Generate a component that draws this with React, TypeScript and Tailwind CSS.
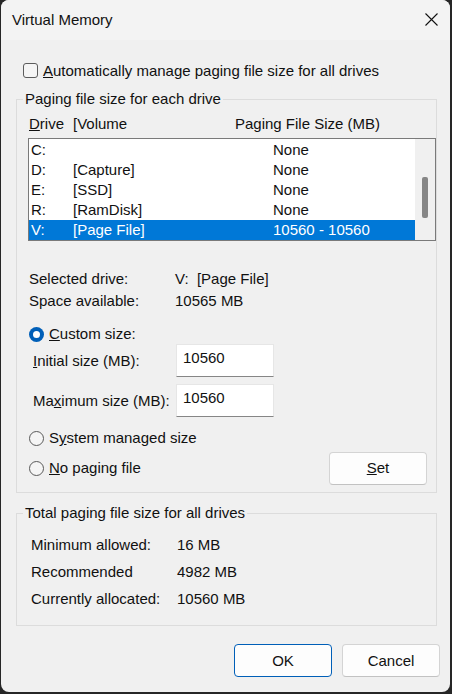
const drives = [
  { drive: "C:", volume: "", size: "None" },
  { drive: "D:", volume: "[Capture]", size: "None" },
  { drive: "E:", volume: "[SSD]", size: "None" },
  { drive: "R:", volume: "[RamDisk]", size: "None" },
  { drive: "V:", volume: "[Page File]", size: "10560 - 10560", selected: true },
]

function Radio({ checked }: { checked?: boolean }) {
  if (checked) {
    return (
      <span className="flex h-[15px] w-[15px] shrink-0 items-center justify-center rounded-full bg-[#005fb8]">
        <span className="h-[7px] w-[7px] rounded-full bg-white" />
      </span>
    )
  }
  return <span className="h-[15px] w-[15px] shrink-0 rounded-full border border-[#595959] bg-[#f5f5f5]" />
}

function SizeInput({ value }: { value: string }) {
  return (
    <div className="h-[33px] w-[98px] border border-[#e6e6e6] border-b-[#868686] bg-white pl-[6px] pt-[3px] leading-[20px]">
      {value}
    </div>
  )
}

function Button({ label, primary }: { label: React.ReactNode; primary?: boolean }) {
  return (
    <div
      className={
        primary
          ? "flex h-[33px] w-[98px] items-center justify-center rounded-[4px] border border-[#005fb8] bg-[#fdfdfd]"
          : "flex h-[33px] w-[98px] items-center justify-center rounded-[4px] border border-[#d4d4d4] border-b-[#c2c2c2] bg-[#fdfdfd]"
      }
    >
      {label}
    </div>
  )
}

export default function App() {
  return (
    <div className="h-[694px] w-[452px] bg-[#262626] pl-[1px] font-['Liberation_Sans','Noto_Sans',sans-serif] text-[15px] leading-[20px] text-[#111]">
      <div className="flex h-[692px] w-[449px] flex-col overflow-hidden rounded-[8px] bg-[#f0f0f0]">
        {/* title bar */}
        <div className="flex h-[40px] shrink-0 items-center justify-between bg-[#f3f3f3] pl-[11px] pr-[12px]">
          <span>Virtual Memory</span>
          <svg width="13" height="13" viewBox="0 0 13 13" className="mb-[2px]">
            <path d="M0.5 0.5 L12.5 12.5 M12.5 0.5 L0.5 12.5" stroke="#111" strokeWidth="1.1" fill="none" />
          </svg>
        </div>

        <div className="ml-[22px] mt-[23px] flex h-[15px] items-center gap-[5px]">
          <span className="h-[15px] w-[15px] shrink-0 rounded-[3px] border border-[#5c5c5c] bg-[#f5f5f5]" />
          <span>
            <u>A</u>utomatically manage paging file size for all drives
          </span>
        </div>

        {/* paging file size for each drive */}
        <fieldset className="ml-[15px] mt-[11px] w-[421px] border border-[#dcdcdc] pb-[8px]">
          <legend className="ml-[6px] h-[20px] px-[2px]">Paging file size for each drive</legend>
          <div className="pl-[11px]">
            <div className="mt-[5px] flex h-[20px] items-center pl-[1px]">
              <span className="w-[44px]">
                <u>D</u>rive
              </span>
              <span className="w-[162px]">[Volume</span>
              <span>Paging File Size (MB)</span>
            </div>

            <div className="mt-[4px] flex h-[103px] w-[408px] border border-[#7a7a7a] bg-white">
              <div className="w-[386px] pt-[1px]">
                {drives.map((d) => (
                  <div
                    key={d.drive}
                    className={
                      d.selected
                        ? "flex h-[20px] items-center bg-[#0078d7] pl-[2px] text-white"
                        : "flex h-[20px] items-center pl-[2px]"
                    }
                  >
                    <span className="w-[42px]">{d.drive}</span>
                    <span className="w-[200px]">{d.volume}</span>
                    <span>{d.size}</span>
                  </div>
                ))}
              </div>
              <div className="w-[20px] bg-[#f0f0f0] pl-[7px] pt-[38px]">
                <div className="h-[41px] w-[6px] rounded-[2px] bg-[#868686]" />
              </div>
            </div>

            <div className="mt-[27px] pl-[1px]">
              <div className="flex h-[22px] items-center">
                <span className="w-[146px]">Selected drive:</span>
                <span>V:&nbsp; [Page File]</span>
              </div>
              <div className="flex h-[22px] items-center">
                <span className="w-[146px]">Space available:</span>
                <span>10565 MB</span>
              </div>
            </div>

            <div className="mt-[12px] flex h-[20px] items-center gap-[5px] pl-[1px]">
              <Radio checked />
              <span>
                <u>C</u>ustom size:
              </span>
            </div>

            <div className="flex items-center pl-[5px]">
              <span className="w-[143px]">
                <u>I</u>nitial size (MB):
              </span>
              <SizeInput value="10560" />
            </div>
            <div className="mt-[7px] flex items-center pl-[5px]">
              <span className="w-[143px]">
                Ma<u>x</u>imum size (MB):
              </span>
              <SizeInput value="10560" />
            </div>

            <div className="mt-[11px] flex h-[20px] items-center gap-[5px] pl-[1px]">
              <Radio />
              <span>
                S<u>y</u>stem managed size
              </span>
            </div>
            <div className="mt-[4px] flex h-[32px] items-center pl-[1px]">
              <div className="flex items-center gap-[5px]">
                <Radio />
                <span>
                  <u>N</u>o paging file
                </span>
              </div>
              <div className="ml-auto mr-[9px]">
                <Button label={<><u>S</u>et</>} />
              </div>
            </div>
          </div>
        </fieldset>

        {/* totals */}
        <fieldset className="ml-[15px] mt-[10px] w-[421px] border border-[#dcdcdc] pb-[13px]">
          <legend className="ml-[6px] h-[20px] px-[2px]">Total paging file size for all drives</legend>
          <div className="mt-[8px] pl-[14px]">
            <div className="flex h-[27px] items-center">
              <span className="w-[146px]">Minimum allowed:</span>
              <span>16 MB</span>
            </div>
            <div className="flex h-[27px] items-center">
              <span className="w-[146px]">Recommended</span>
              <span>4982 MB</span>
            </div>
            <div className="flex h-[27px] items-center">
              <span className="w-[146px]">Currently allocated:</span>
              <span>10560 MB</span>
            </div>
          </div>
        </fieldset>

        <div className="mt-[18px] flex justify-end gap-[10px] pr-[10px]">
          <Button label="OK" primary />
          <Button label="Cancel" />
        </div>
      </div>
    </div>
  )
}
